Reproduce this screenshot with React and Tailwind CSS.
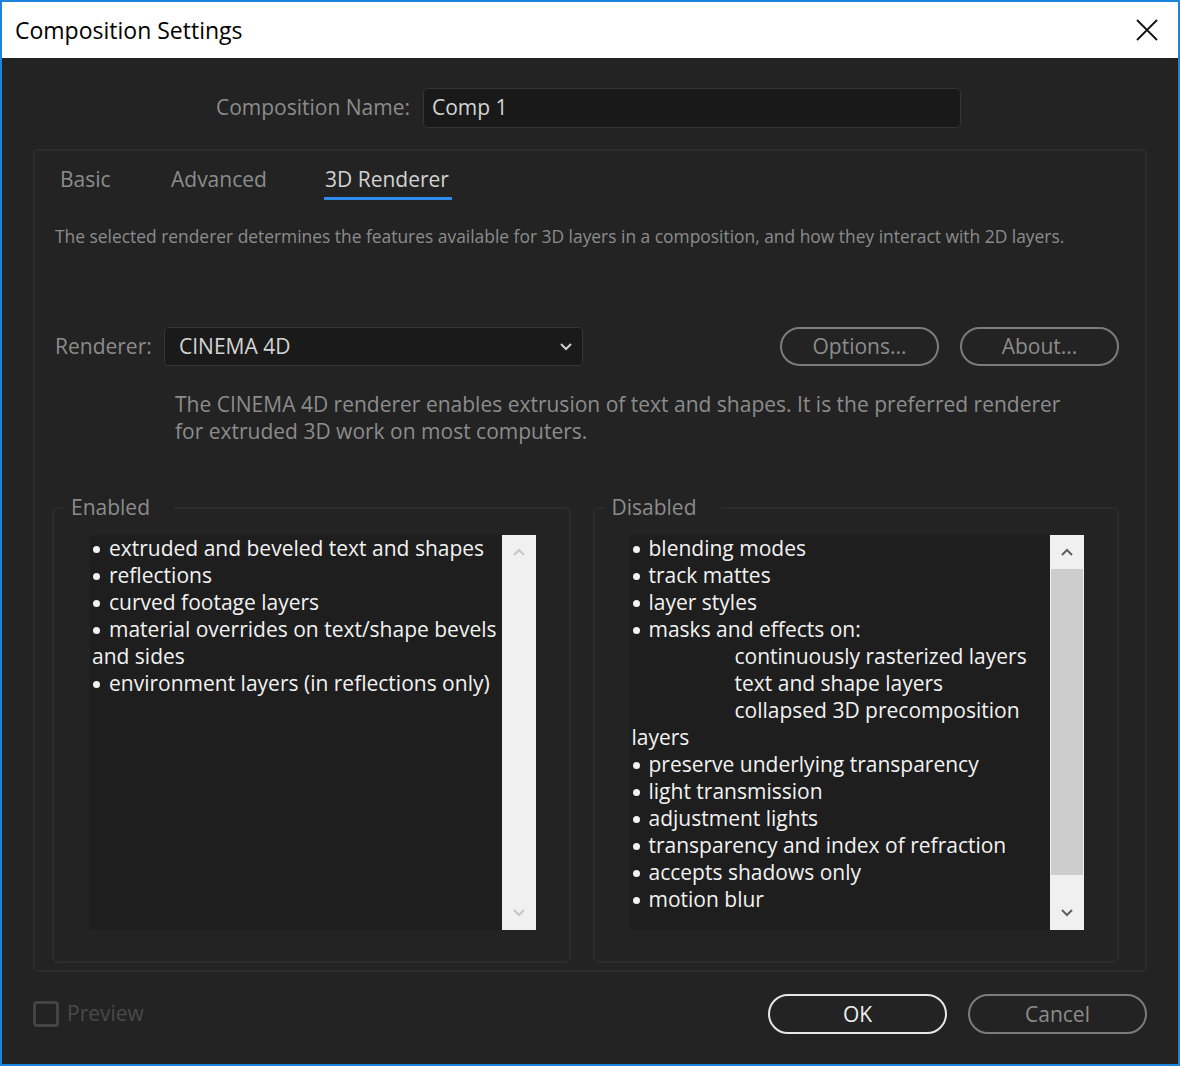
import React from "react";

const enabledLines = [
  { t: "extruded and beveled text and shapes", b: true },
  { t: "reflections", b: true },
  { t: "curved footage layers", b: true },
  { t: "material overrides on text/shape bevels", b: true },
  { t: "and sides" },
  { t: "environment layers (in reflections only)", b: true },
];

const disabledLines = [
  { t: "blending modes", b: true },
  { t: "track mattes", b: true },
  { t: "layer styles", b: true },
  { t: "masks and effects on:", b: true },
  { t: "continuously rasterized layers", indent: true },
  { t: "text and shape layers", indent: true },
  { t: "collapsed 3D precomposition", indent: true },
  { t: "layers" },
  { t: "preserve underlying transparency", b: true },
  { t: "light transmission", b: true },
  { t: "adjustment lights", b: true },
  { t: "transparency and index of refraction", b: true },
  { t: "accepts shadows only", b: true },
  { t: "motion blur", b: true },
];

function Chevron({ up, className }) {
  return (
    <svg width="12" height="8" viewBox="0 0 12 8" className={className}>
      <path
        d={up ? "M1 7 L6 2 L11 7" : "M1 1 L6 6 L11 1"}
        fill="none"
        stroke="currentColor"
        strokeWidth="2"
      />
    </svg>
  );
}

function ListBox({ lines, width, active }) {
  return (
    <div className={`flex h-[395px] ${width}`}>
      <div className="flex-1 bg-[#1e1e1e] pl-[2px] text-[21px] leading-[27px] text-[#f2f2f2] overflow-hidden">
        {lines.map((l, i) => (
          <div
            key={i}
            className={`flex items-center whitespace-nowrap ${l.indent ? "pl-[103px]" : ""}`}
          >
            {l.b && (
              <span className="w-[17px] shrink-0 flex pl-[1px] pt-[3px]">
                <span className="w-[7px] h-[7px] rounded-full bg-[#f2f2f2]" />
              </span>
            )}
            <span>{l.t}</span>
          </div>
        ))}
      </div>
      {/* scrollbar */}
      <div className="w-[34px] bg-[#f0f0f0] flex flex-col">
        <div
          className={`h-[34px] flex items-center justify-center ${
            active ? "text-[#606060]" : "text-[#c6c6c6]"
          }`}
        >
          <Chevron up />
        </div>
        <div className="flex-1 px-[1px]">
          {active && <div className="h-[306px] bg-[#cdcdcd]" />}
        </div>
        <div
          className={`h-[34px] flex items-center justify-center ${
            active ? "text-[#606060]" : "text-[#c6c6c6]"
          }`}
        >
          <Chevron />
        </div>
      </div>
    </div>
  );
}

function Group({ label, width, lines, listWidth, padLeft, active }) {
  return (
    <fieldset className={`${width} h-[471px] border-2 border-[#2c2c2c] rounded-[6px] p-0 m-0`}>
      <legend className="ml-[9px] pl-[8px] pr-[24px] text-[21px] text-[#8c8c8c]">{label}</legend>
      <div className={`${padLeft} pt-[11px]`}>
        <ListBox lines={lines} width={listWidth} active={active} />
      </div>
    </fieldset>
  );
}

export default function App() {
  return (
    <div
      className="w-[1180px] h-[1066px] border-2 border-[#1c84dc] bg-[#232323] flex flex-col"
      style={{ fontFamily: '"Open Sans", "Noto Sans", sans-serif' }}
    >
      {/* Title bar */}
      <div className="h-[56px] bg-white flex items-center justify-between pl-[13px] pr-[20px] shrink-0">
        <span className="text-[23px] text-black">Composition Settings</span>
        <svg width="22" height="22" viewBox="0 0 22 22">
          <path d="M1 1 L21 21 M21 1 L1 21" stroke="#111" strokeWidth="1.8" fill="none" />
        </svg>
      </div>

      {/* Body */}
      <div className="flex-1 flex flex-col px-[31px]">
        {/* Composition name */}
        <div className="flex items-center mt-[30px] h-[40px]">
          <div className="w-[390px] text-right pr-[13px] text-[21px] text-[#8c8c8c]">
            Composition Name:
          </div>
          <div className="w-[538px] h-[40px] bg-[#191919] border border-[#353535] rounded-[5px] flex items-center pl-[8px] text-[21px] text-[#d4d4d4]">
            Comp 1
          </div>
        </div>

        {/* Tab panel */}
        <div className="mt-[21px] h-[823px] border-2 border-[#2c2c2c] rounded-[5px] flex flex-col pl-[17px] pr-[26px]">
          {/* Tabs */}
          <div className="flex text-[21px] mt-[13px] h-[36px]">
            <div className="ml-[8px] w-[111px] text-[#8c8c8c]">Basic</div>
            <div className="w-[153px] text-[#8c8c8c]">Advanced</div>
            <div className="flex flex-col">
              <span className="text-[#d2d2d2] px-[1px]">3D Renderer</span>
              <div className="h-[3px] bg-[#2d8ceb] w-[128px] mt-auto" />
            </div>
          </div>

          <div className="mt-[23px] ml-[3px] text-[17.4px] text-[#8c8c8c] whitespace-nowrap">
            The selected renderer determines the features available for 3D layers in a composition, and how they interact with 2D layers.
          </div>

          {/* Renderer row */}
          <div className="flex items-center mt-[78px] h-[39px]">
            <div className="ml-[3px] w-[109px] text-[21px] text-[#8c8c8c]">Renderer:</div>
            <div className="w-[419px] h-[39px] bg-[#1a1a1a] border border-[#353535] rounded-[4px] flex items-center justify-between pl-[14px] pr-[10px] text-[21px] text-[#d4d4d4]">
              <span>CINEMA 4D</span>
              <Chevron className="text-[#cfcfcf]" />
            </div>
            <div className="ml-auto flex gap-[21px]">
              <button className="w-[159px] h-[39px] rounded-full border-2 border-[#7c7c7c] text-[21px] text-[#8c8c8c] leading-none">
                Options...
              </button>
              <button className="w-[159px] h-[39px] rounded-full border-2 border-[#7c7c7c] text-[21px] text-[#8c8c8c] leading-none">
                About...
              </button>
            </div>
          </div>

          <div className="mt-[25px] ml-[123px] text-[21px] leading-[27px] text-[#8c8c8c]">
            <div className="whitespace-nowrap">
              The CINEMA 4D renderer enables extrusion of text and shapes. It is the preferred renderer
            </div>
            <div className="whitespace-nowrap">for extruded 3D work on most computers.</div>
          </div>

          {/* Enabled / Disabled groups */}
          <div className="flex gap-[22px] mt-[47px]">
            <Group
              label="Enabled"
              width="w-[519px]"
              lines={enabledLines}
              listWidth="w-[446px]"
              padLeft="pl-[36px]"
            />
            <Group
              label="Disabled"
              width="w-[527px]"
              lines={disabledLines}
              listWidth="w-[454px]"
              padLeft="pl-[35px]"
              active
            />
          </div>
        </div>

        {/* Footer */}
        <div className="flex items-center mt-[22px] h-[40px]">
          <div className="w-[26px] h-[26px] border-[3px] border-[#444] rounded-[4px]" />
          <span className="ml-[8px] text-[21px] text-[#4a4a4a]">Preview</span>
          <div className="ml-auto flex gap-[21px]">
            <button className="w-[179px] h-[40px] rounded-full border-2 border-[#e6e6e6] text-[21px] text-[#f0f0f0] leading-none">
              OK
            </button>
            <button className="w-[179px] h-[40px] rounded-full border-2 border-[#7c7c7c] text-[21px] text-[#8c8c8c] leading-none">
              Cancel
            </button>
          </div>
        </div>
      </div>
    </div>
  );
}
